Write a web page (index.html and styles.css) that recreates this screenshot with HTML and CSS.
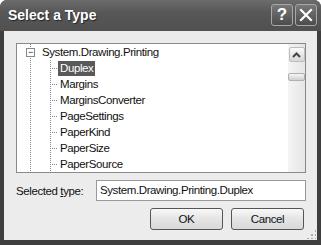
FILE: index.html
```html
<!DOCTYPE html>
<html lang="en">
<head>
    <meta charset="UTF-8">
    <title>Select a Type</title>
    <link rel="stylesheet" href="styles.css">
</head>
<body>

    <div class="window">
        <!-- Title bar -->
        <div class="titlebar">
            <span class="title">Select a Type</span>
            <div class="caption-buttons">
                <div class="cap-btn">?</div>
                <div class="cap-btn">
                    <svg width="14" height="14" viewBox="0 0 14 14">
                        <path d="M2 2 L12 12 M12 2 L2 12" stroke="#fff" stroke-width="2.2" stroke-linecap="square"/>
                    </svg>
                </div>
            </div>
        </div>

        <div class="client">
            <!-- Type tree -->
            <div class="tree-box">
                <div class="tree">
                    <div class="row root">
                        <span class="expander">&minus;</span>
                        <span class="label">System.Drawing.Printing</span>
                    </div>
                    <div class="children">
                        <div class="row child"><span class="label selected">Duplex</span></div>
                        <div class="row child"><span class="label">Margins</span></div>
                        <div class="row child"><span class="label">MarginsConverter</span></div>
                        <div class="row child"><span class="label">PageSettings</span></div>
                        <div class="row child"><span class="label">PaperKind</span></div>
                        <div class="row child"><span class="label">PaperSize</span></div>
                        <div class="row child"><span class="label">PaperSource</span></div>
                    </div>
                </div>
                <div class="scrollbar">
                    <div class="scroll-up">
                        <svg width="9" height="6" viewBox="0 0 9 6">
                            <path d="M1 5 L4.5 1.5 L8 5" fill="none" stroke="#444" stroke-width="2"/>
                        </svg>
                    </div>
                    <div class="scroll-thumb"></div>
                </div>
            </div>

            <!-- Selected type -->
            <div class="selected-row">
                <span class="field-label">Selected <u>t</u>ype:</span>
                <div class="textbox">System.Drawing.Printing.Duplex</div>
            </div>

            <!-- Buttons -->
            <div class="button-row">
                <button class="btn">OK</button>
                <button class="btn">Cancel</button>
            </div>

            <div class="grip"></div>
        </div>
    </div>

</body>
</html>
```
FILE: styles.css
```css
/* General Styles */
body {
    margin: 0;
    background-color: #fff;
    font-family: 'Liberation Sans', Arial, sans-serif;
    font-size: 11.5px;
    letter-spacing: -0.4px;
    color: #111;
}

.window {
    width: 321px;
    height: 245px;
    box-sizing: border-box;
    background-color: #3e3e3e;
    border-radius: 7px 7px 0 0;
    display: flex;
    flex-direction: column;
    padding: 0 4px 5px 4px;
}

/* Title bar */
.titlebar {
    height: 31px;
    margin: 0 -4px;
    padding: 0 4px 0 8px;
    display: flex;
    align-items: center;
    justify-content: space-between;
    background: linear-gradient(#6c6c6c, #575757 40%, #505050);
    border-radius: 7px 7px 0 0;
}

.title {
    color: #fff;
    font-size: 14px;
    font-weight: bold;
    letter-spacing: 0;
    text-shadow: 1px 1px 1px #222;
    margin-top: -2px;
}

.caption-buttons {
    display: flex;
    gap: 2px;
    margin-top: -1px;
}

.cap-btn {
    width: 20px;
    height: 20px;
    border: 1px solid #a8a8a8;
    border-radius: 3px;
    background: linear-gradient(#777, #4c4c4c);
    color: #fff;
    font-size: 17px;
    font-weight: bold;
    letter-spacing: 0;
    display: flex;
    align-items: center;
    justify-content: center;
}

/* Client area */
.client {
    flex: 1;
    position: relative;
    background-color: #ececec;
    display: flex;
    flex-direction: column;
    padding: 12px 11px 0 12px;
}

.tree-box {
    height: 128px;
    border: 1px solid #8a8a8a;
    background-color: #fff;
    display: flex;
}

.tree {
    flex: 1;
    background-image: linear-gradient(#888 50%, transparent 50%);
    background-size: 1px 2px;
    background-repeat: repeat-y;
    background-position: 13px 0;
}

.row {
    height: 16px;
    display: flex;
    align-items: center;
}

.root {
    padding-left: 9px;
}

.expander {
    width: 7px;
    height: 7px;
    border: 1px solid #888;
    background-color: #fff;
    font-size: 9px;
    line-height: 7px;
    text-align: center;
    color: #222;
    margin-right: 5px;
}

.children {
    margin-left: 33px;
    background-image: linear-gradient(#888 50%, transparent 50%);
    background-size: 1px 2px;
    background-repeat: repeat-y;
}

.child {
    padding-left: 8px;
    position: relative;
}

.child::before {
    content: "";
    position: absolute;
    left: 0;
    top: 8px;
    width: 8px;
    height: 1px;
    background-image: linear-gradient(90deg, #888 50%, transparent 50%);
    background-size: 2px 1px;
}

.label {
    padding: 1px 2px;
    line-height: 13px;
    background-color: #fff;
}

.selected {
    background-color: #595959;
    color: #fff;
}

/* Scrollbar */
.scrollbar {
    width: 17px;
    background: linear-gradient(90deg, #f4f4f4, #e6e6e6);
    display: flex;
    flex-direction: column;
    align-items: center;
    padding-top: 3px;
}

.scroll-up {
    width: 14px;
    height: 13px;
    border: 1px solid #bdbdbd;
    border-radius: 2px;
    background: linear-gradient(#fafafa, #d6d6d6);
    display: flex;
    align-items: center;
    justify-content: center;
}

.scroll-thumb {
    width: 15px;
    height: 6px;
    margin-top: 11px;
    border: 1px solid #b0b0b0;
    border-radius: 2px;
    background: linear-gradient(#f6f6f6, #d0d0d0);
}

/* Selected type row */
.selected-row {
    margin-top: 7px;
    display: flex;
    align-items: center;
}

.field-label {
    width: 80px;
}

.textbox {
    flex: 1;
    border: 1px solid #999;
    background-color: #fff;
    box-sizing: border-box;
    height: 21px;
    padding: 3px 3px;
    line-height: 13px;
}

/* Buttons */
.button-row {
    margin-top: 7px;
    display: flex;
    justify-content: flex-end;
    gap: 8px;
    padding-right: 2px;
}

.btn {
    width: 73px;
    height: 22px;
    border: 1px solid #555;
    border-radius: 3px;
    background: linear-gradient(#f8f8f8, #e4e4e4 50%, #d9d9d9);
    font-family: 'Liberation Sans', Arial, sans-serif;
    font-size: 11.5px;
    letter-spacing: -0.4px;
    color: #111;
}

.grip {
    position: absolute;
    right: 1px;
    bottom: 1px;
    width: 10px;
    height: 10px;
    background-image: radial-gradient(circle, #aaa 1px, transparent 1.2px);
    background-size: 4px 4px;
    clip-path: polygon(100% 0, 100% 100%, 0 100%);
}
```
